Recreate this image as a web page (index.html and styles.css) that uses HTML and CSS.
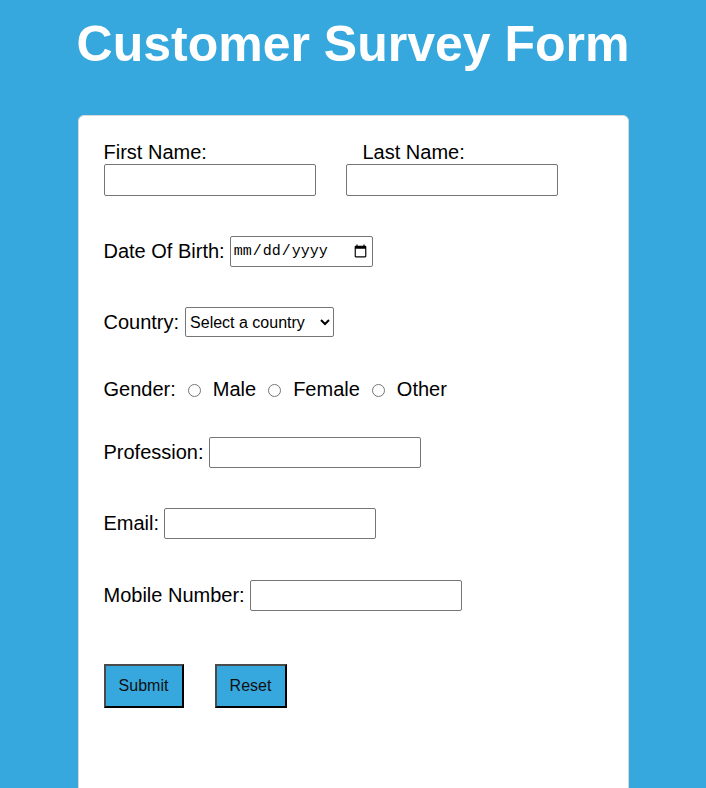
FILE: index.html
```html
<!DOCTYPE html>
<html lang="en">
<head>
<meta charset="utf-8">
<title>Customer Survey Form</title>
<link rel="stylesheet" href="styles.css">
</head>
<body>
<h1 class="title">Customer Survey Form</h1>
<div class="card">
  <form class="form">
    <div class="name-row">
      <div class="name-col">
        <label class="label" for="fname">First Name:</label>
        <input class="text-input name-input" type="text" id="fname">
      </div>
      <div class="name-col name-col-last">
        <label class="label label-last" for="lname">Last Name:</label>
        <input class="text-input name-input" type="text" id="lname">
      </div>
    </div>
    <div class="row">
      <label class="label" for="dob">Date Of Birth:</label>
      <input class="date-input" type="date" id="dob">
    </div>
    <div class="row">
      <label class="label" for="country">Country:</label>
      <select class="select" id="country">
        <option>Select a country</option>
        <option>India</option>
        <option>USA</option>
      </select>
    </div>
    <div class="row gender-row">
      <span class="label">Gender:</span>
      <input class="radio" type="radio" name="gender" id="male">
      <label class="label" for="male">Male</label>
      <input class="radio" type="radio" name="gender" id="female">
      <label class="label" for="female">Female</label>
      <input class="radio" type="radio" name="gender" id="other">
      <label class="label" for="other">Other</label>
    </div>
    <div class="row">
      <label class="label" for="prof">Profession:</label>
      <input class="text-input" type="text" id="prof">
    </div>
    <div class="row">
      <label class="label" for="email">Email:</label>
      <input class="text-input" type="email" id="email">
    </div>
    <div class="row mobile-row">
      <label class="label" for="mobile">Mobile Number:</label>
      <input class="text-input" type="tel" id="mobile">
    </div>
    <div class="buttons">
      <button class="btn btn-submit" type="submit">Submit</button>
      <button class="btn btn-reset" type="reset">Reset</button>
    </div>
  </form>
</div>
</body>
</html>
```
FILE: styles.css
```css
html, body {
  margin: 0;
  padding: 0;
}

body {
  background: #36a8de;
  font-family: "Liberation Sans", Arial, sans-serif;
  color: #000;
}

.title {
  margin: 0;
  padding: 16px 0 42px;
  text-align: center;
  color: #fff;
  font-size: 50px;
  font-weight: bold;
  line-height: 57px;
}

.card {
  box-sizing: border-box;
  width: 551px;
  margin: 0 auto;
  background: #fff;
  border: 1px solid #d8d8d8;
  border-radius: 6px;
  padding: 25px 25px 120px;
}

.form {
  display: flex;
  flex-direction: column;
  gap: 40px;
}

.label {
  font-size: 20px;
  line-height: 23px;
}

.name-row {
  display: flex;
}

.name-col {
  display: flex;
  flex-direction: column;
}

.name-col-last {
  margin-left: 30px;
}

.label-last {
  padding-left: 17px;
}

.text-input {
  box-sizing: border-box;
  width: 212px;
  height: 31px;
  margin: 0;
  border: 1px solid #767676;
  border-radius: 2px;
  font-size: 16px;
  font-family: "Liberation Sans", Arial, sans-serif;
  background: #fff;
}

.name-input {
  height: 32px;
}

.row {
  display: flex;
  align-items: center;
  gap: 5px;
}

.date-input {
  box-sizing: border-box;
  width: 143px;
  height: 31px;
  margin: 0;
  padding: 0 2px;
  border: 1px solid #767676;
  border-radius: 2px;
  font-family: "Liberation Mono", "DejaVu Sans Mono", monospace;
  font-size: 15px;
  background: #fff;
}

.select {
  box-sizing: border-box;
  width: 149px;
  height: 30px;
  margin: 0 0 0 1px;
  border: 1px solid #767676;
  border-radius: 2px;
  font-family: "Liberation Sans", Arial, sans-serif;
  font-size: 16px;
  background: #fff;
  color: #000;
}

.gender-row {
  gap: 12px;
  height: 20px;
  margin-top: 2px;
  margin-bottom: -2px;
}

.radio {
  width: 13px;
  height: 13px;
  margin: 2px 0 0;
}

.mobile-row {
  margin-top: 1px;
}

.buttons {
  display: flex;
  gap: 31px;
  margin-top: 13px;
}

.btn {
  box-sizing: border-box;
  height: 44px;
  margin: 0;
  padding: 0;
  background: #36a8de;
  border: 2px solid;
  border-color: #4a4a4a #000 #000 #4a4a4a;
  border-radius: 0;
  font-family: "Liberation Sans", Arial, sans-serif;
  font-size: 16px;
  color: #111;
}

.btn-submit {
  width: 80px;
}

.btn-reset {
  width: 72px;
}
```
